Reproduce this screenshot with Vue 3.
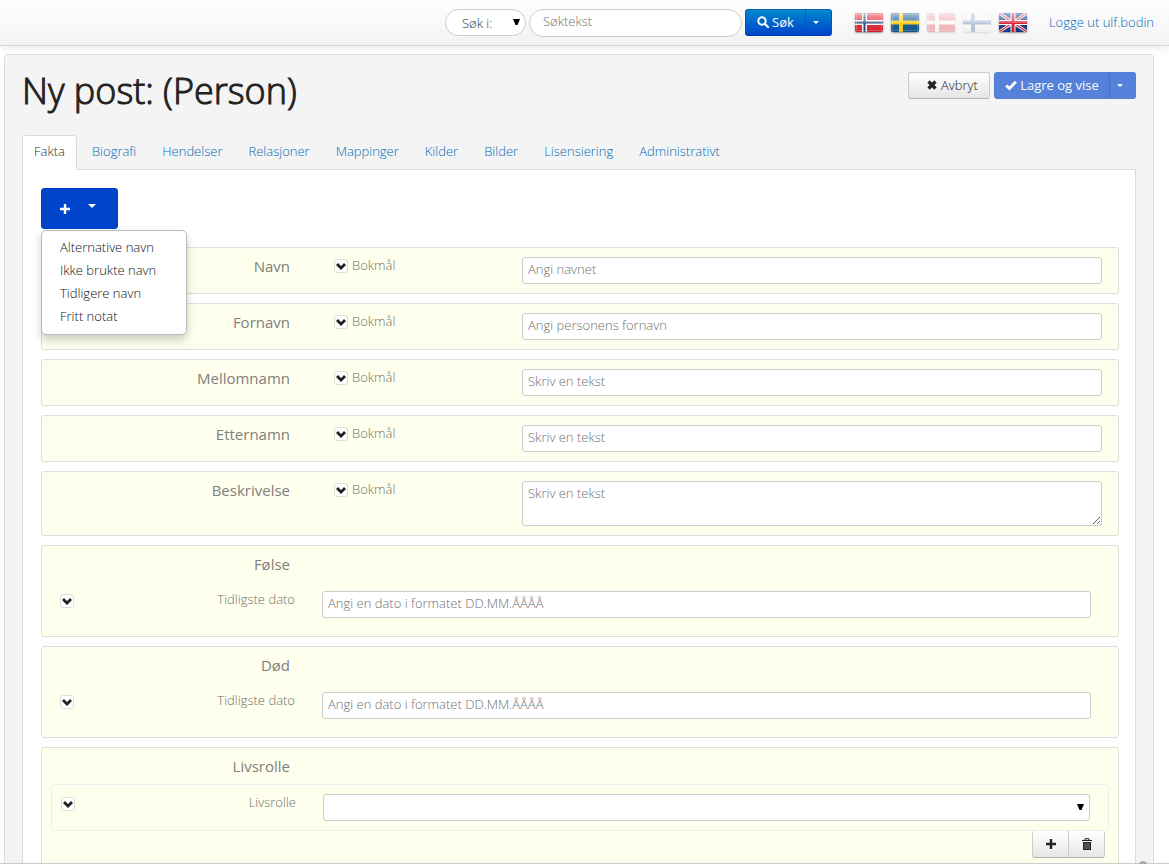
<script setup>
import { ref } from 'vue'

const tabs = ['Fakta', 'Biografi', 'Hendelser', 'Relasjoner', 'Mappinger', 'Kilder', 'Bilder', 'Lisensiering', 'Administrativt']
const activeTab = ref('Fakta')
const menuOpen = ref(true)
const menuItems = ['Alternative navn', 'Ikke brukte navn', 'Tidligere navn', 'Fritt notat']
const textFields = [
  { id: 'navn', label: 'Navn', hint: 'Angi navnet' },
  { id: 'fornavn', label: 'Fornavn', hint: 'Angi personens fornavn' },
  { id: 'mellomnamn', label: 'Mellomnamn', hint: 'Skriv en tekst' },
  { id: 'etternamn', label: 'Etternamn', hint: 'Skriv en tekst' },
  { id: 'beskrivelse', label: 'Beskrivelse', hint: 'Skriv en tekst', multiline: true }
]
const dateFields = [
  { id: 'folse', label: 'Følse' },
  { id: 'dod', label: 'Død' }
]
</script>

<template>
  <div class="app">
    <header class="navbar">
      <form class="search" @submit.prevent>
        <div class="select-wrap scope">
          <select aria-label="Søk i"><option>Søk i:</option></select>
          <svg class="arrow" viewBox="0 0 7 7" aria-hidden="true"><path d="M0 0h7L4.500 6h-2z" /></svg>
        </div>
        <input class="query" type="text" placeholder="Søktekst" aria-label="Søktekst">
        <div class="group">
          <button class="btn primary find" type="submit">
            <svg class="icon" viewBox="0 0 12 12" aria-hidden="true"><circle cx="5" cy="5" r="3.700" fill="none" stroke="currentColor" stroke-width="2" /><path d="M7.700 7.700L11 11" stroke="currentColor" stroke-width="2.200" stroke-linecap="round" /></svg>
            Søk
          </button>
          <button class="btn primary more" type="button" aria-label="Flere søkevalg"><span class="caret"></span></button>
        </div>
      </form>
      <nav class="flags" aria-label="Språk">
        <svg width="0" height="0" class="defs" aria-hidden="true">
          <defs><linearGradient id="gloss" x1="0" y1="0" x2="0" y2="1"><stop offset="0" stop-color="#fff" stop-opacity=".6" /><stop offset=".5" stop-color="#fff" stop-opacity=".25" /><stop offset=".52" stop-color="#fff" stop-opacity="0" /><stop offset="1" stop-color="#000" stop-opacity=".12" /></linearGradient></defs>
        </svg>
        <button type="button" aria-label="Norsk">
          <svg viewBox="0 0 28 19"><path fill="#e42535" d="M0 0h28v19H0z" /><path fill="#fff" d="M7 0h5v19H7zM0 7h28v5H0z" /><path fill="#28477c" d="M8.500 0h2v19h-2zM0 8.500h28v2H0z" /><path fill="url(#gloss)" d="M0 0h28v19H0z" /><path fill="none" stroke="#fff" stroke-opacity=".2" d="M1.500 1.500h25v16h-25z" /></svg>
        </button>
        <button type="button" aria-label="Svenska">
          <svg viewBox="0 0 28 19"><path fill="#125a94" d="M0 0h28v19H0z" /><path fill="#ffcb10" d="M8 0h4v19H8zM0 7.500h28v4H0z" /><path fill="url(#gloss)" d="M0 0h28v19H0z" /><path fill="none" stroke="#fff" stroke-opacity=".2" d="M1.500 1.500h25v16h-25z" /></svg>
        </button>
        <button type="button" class="faded" aria-label="Dansk">
          <svg viewBox="0 0 28 19"><path fill="#e42535" d="M0 0h28v19H0z" /><path fill="#fff" d="M8 0h4v19H8zM0 7.500h28v4H0z" /><path fill="url(#gloss)" d="M0 0h28v19H0z" /><path fill="none" stroke="#fff" stroke-opacity=".2" d="M1.500 1.500h25v16h-25z" /></svg>
        </button>
        <button type="button" class="faded" aria-label="Suomi">
          <svg viewBox="0 0 28 19"><path fill="#fafafa" d="M0 0h28v19H0z" /><path fill="#24508f" d="M8 0h4v19H8zM0 7.500h28v4H0z" /><path fill="url(#gloss)" d="M0 0h28v19H0z" /></svg>
        </button>
        <button type="button" aria-label="English">
          <svg viewBox="0 0 28 19"><path fill="#163a8c" d="M0 0h28v19H0z" /><path stroke="#fff" stroke-width="3" d="M0 0l28 19M28 0L0 19" /><path stroke="#d92435" stroke-width="1.200" d="M0 0l28 19M28 0L0 19" /><path fill="#fff" d="M11.500 0h5v19h-5zM0 7h28v5H0z" /><path fill="#d92435" d="M12.500 0h3v19h-3zM0 8h28v3H0z" /><path fill="url(#gloss)" d="M0 0h28v19H0z" /></svg>
        </button>
      </nav>
      <a class="logout" href="#">Logge ut ulf.bodin</a>
    </header>

    <main class="scroll">
      <div class="well">
        <div class="head">
          <h1>Ny post: (Person)</h1>
          <div class="actions">
            <button class="btn cancel" type="button">
              <svg class="icon" viewBox="0 0 12 12" aria-hidden="true"><path d="M2.500 2.500l7 7M9.500 2.500l-7 7" stroke="currentColor" stroke-width="3.200" /></svg>
              Avbryt
            </button>
            <div class="group muted">
              <button class="btn flat save" type="button">
                <svg class="icon" viewBox="0 0 12 12" aria-hidden="true"><path d="M1.200 6.400L4.400 9.500 10.800 2.800" fill="none" stroke="currentColor" stroke-width="2.800" /></svg>
                Lagre og vise
              </button>
              <button class="btn flat more" type="button" aria-label="Flere lagringsvalg"><span class="caret"></span></button>
            </div>
          </div>
        </div>

        <nav class="tabs">
          <a v-for="t in tabs" :key="t" href="#" :class="{ active: t === activeTab }" @click.prevent="activeTab = t">{{ t }}</a>
        </nav>

        <section class="pane">
          <div class="adder">
            <button class="btn flat add" type="button" aria-label="Legg til" :aria-expanded="menuOpen" @click="menuOpen = !menuOpen">
              <svg class="icon" viewBox="0 0 12 12" aria-hidden="true"><path d="M6 1v10M1 6h10" stroke="currentColor" stroke-width="2.400" /></svg>
              <span class="caret"></span>
            </button>
            <ul v-if="menuOpen" class="menu">
              <li v-for="m in menuItems" :key="m"><a href="#">{{ m }}</a></li>
            </ul>
          </div>

          <div v-for="f in textFields" :key="f.id" class="row text-row">
            <label class="title" :for="f.id">{{ f.label }}</label>
            <div class="lang">
              <button class="toggle" type="button" :aria-label="'Velg språk for ' + f.label"><svg viewBox="0 0 12 12"><path d="M1 5L3 3 6 6 9 3 11 5 6 10z" /></svg></button>
              <span>Bokmål</span>
            </div>
            <textarea v-if="f.multiline" :id="f.id" :placeholder="f.hint"></textarea>
            <input v-else :id="f.id" type="text" :placeholder="f.hint">
          </div>

          <div v-for="f in dateFields" :key="f.id" class="row section">
            <h2 class="title">{{ f.label }}</h2>
            <div class="sub">
              <button class="toggle" type="button" :aria-label="'Vis ' + f.label"><svg viewBox="0 0 12 12"><path d="M1 5L3 3 6 6 9 3 11 5 6 10z" /></svg></button>
              <label :for="f.id">Tidligste dato</label>
              <input :id="f.id" type="text" placeholder="Angi en dato i formatet DD.MM.ÅÅÅÅ">
            </div>
          </div>

          <div class="row section roles">
            <h2 class="title">Livsrolle</h2>
            <div class="sub boxed">
              <button class="toggle" type="button" aria-label="Vis livsrolle"><svg viewBox="0 0 12 12"><path d="M1 5L3 3 6 6 9 3 11 5 6 10z" /></svg></button>
              <label for="livsrolle">Livsrolle</label>
              <div class="select-wrap">
                <select id="livsrolle"><option></option></select>
                <svg class="arrow" viewBox="0 0 7 7" aria-hidden="true"><path d="M0 0h7L4.500 6h-2z" /></svg>
              </div>
            </div>
            <div class="group tools">
              <button class="btn" type="button" aria-label="Legg til livsrolle"><svg class="icon" viewBox="0 0 12 12" aria-hidden="true"><path d="M6 1v10M1 6h10" stroke="currentColor" stroke-width="2.400" /></svg></button>
              <button class="btn" type="button" aria-label="Slett livsrolle"><svg class="icon" viewBox="0 0 12 12" aria-hidden="true"><path d="M1 2.500h10M4 2V.7h4V2" fill="none" stroke="currentColor" /><path d="M2 4h8v8H2z" fill="currentColor" /><path d="M4 5v6M6 5v6M8 5v6" stroke="#aaa" stroke-width=".7" /></svg></button>
            </div>
          </div>
        </section>
      </div>
    </main>
    <footer class="bottom"><button type="button" class="to-top" aria-label="Til toppen"></button></footer>
  </div>
</template>

<style>
body { margin: 0; background: #fff; }
</style>

<style scoped>
* { box-sizing: border-box; }
.app {
  position: relative;
  height: 100vh;
  overflow: hidden;
  display: flex;
  flex-direction: column;
  font: 300 13px/20px "Open Sans", sans-serif;
  color: #222;
}
button, input, select, textarea { font: inherit; color: inherit; margin: 0; }
a { color: #006cb8; text-decoration: none; }

.navbar {
  position: relative;
  z-index: 2;
  flex: none;
  height: 46px;
  padding: 0 15px;
  display: flex;
  align-items: center;
  justify-content: flex-end;
  background: linear-gradient(#fff, #f2f2f2);
  border-bottom: 1px solid #d4d4d4;
  box-shadow: 0 1px 10px rgba(0, 0, 0, .1);
}
.search { display: flex; align-items: center; gap: 3px; }
input, textarea, select {
  display: block;
  width: 100%;
  height: 27px;
  padding: 0 5px 3px;
  border: 1px solid #ccc;
  border-radius: 3px;
  background: #fff;
  outline: 0;
}
::placeholder { color: #707070; opacity: 1; }
select { appearance: none; color: #333; }
.select-wrap { position: relative; }
.arrow { position: absolute; right: 6px; top: 10px; width: 7px; height: 7px; }
.scope { width: 81px; }
.scope select { padding: 0 16px; border-radius: 14px; }
.query { width: 213px; height: 28px; padding: 0 13px 3px; border-radius: 14px; }

.group { display: flex; }
.group .btn:first-child { border-radius: 3px 0 0 3px; }
.group .btn:last-child { border-radius: 0 3px 3px 0; margin-left: -1px; }
.btn {
  display: flex;
  align-items: center;
  justify-content: center;
  gap: 3px;
  height: 27px;
  padding: 0 11px 1px;
  border: 1px solid #ccc;
  border-bottom-color: #b3b3b3;
  border-radius: 3px;
  background: linear-gradient(#fff, #e6e6e6);
  color: #222;
  white-space: nowrap;
  cursor: pointer;
}
.btn.primary, .btn.flat { color: #fff; font-weight: 400; }
.btn.primary { background: linear-gradient(#0088cc, #0044cc); border-color: #0062b8 #0055c0 #003ab0; }
.btn.flat { background: #0044cc; border-color: #0040c0; }
.icon { width: 12px; height: 12px; flex: none; }
.caret { border: 3px solid transparent; border-top-color: currentColor; border-bottom: 0; }
.find { width: 61px; }
.btn.more { width: 27px; padding: 0 5px 0 0; }
.btn.flat.more { border-left-color: #002a80; }
.search .group { margin-right: 23px; }

.flags { display: flex; gap: 8px; margin-right: 22px; }
.flags button { padding: 0; border: 0; background: none; }
.flags button svg { display: block; width: 28px; height: 19px; border-radius: 2px; box-shadow: 0 1px 2px rgba(0, 0, 0, .4); }
.flags .faded { opacity: .3; }
.defs { position: absolute; }
.logout { padding-bottom: 1px; }

.scroll { flex: 1; min-height: 0; overflow: auto; scrollbar-width: none; padding: 8px 15px 0 4px; }
.well { padding: 16px 17px 40px; background: #f4f4f4; border: 1px solid #ddd; border-radius: 4px; }
.head { display: flex; justify-content: space-between; align-items: flex-start; height: 64px; }
h1 { margin: 0; font-size: 36px; line-height: 40px; font-weight: 300; -webkit-text-stroke: 1px #222; }
.actions { display: flex; gap: 4px; padding-top: 1px; }
.cancel { width: 82px; padding-left: 17px; }
.muted { opacity: .65; }
.save { width: 116px; }

.tabs { display: flex; gap: 4px; }
.tabs a { height: 34px; padding: 5px 11px 0; border: 1px solid transparent; border-width: 1px 0 0; border-radius: 3px 3px 0 0; }
.tabs .active { height: 35px; margin-bottom: -1px; position: relative; background: #fff; border-color: #ddd; border-width: 1px 1px 0; color: #333; }

.pane { padding: 18px 16px 18px 18px; background: #fff; border: 1px solid #ddd; }
.adder { position: relative; width: max-content; margin-bottom: 18px; }
.add { width: 77px; height: 41px; gap: 17px; padding: 0 15px 0 10px; }
.add .caret { border-width: 4px 4px 0; margin-bottom: 5px; }
.menu {
  position: absolute;
  z-index: 1;
  top: 42px;
  left: 0;
  width: 146px;
  margin: 0;
  padding: 5px 0 6px;
  list-style: none;
  background: #fff;
  border: 1px solid #bbb;
  border-radius: 5px;
  box-shadow: 0 5px 10px rgba(0, 0, 0, .2);
}
.menu a { display: block; padding: 0 18px; line-height: 23px; color: #111; white-space: nowrap; }

.row { margin-bottom: 9px; border: 1px solid #ddd; border-radius: 3px; background: #ffffed; color: #707070; }
.row input, .row textarea { color: #333; }
.title { margin: 0; width: 248px; text-align: right; font-size: 15px; line-height: 20px; font-weight: 400; color: #808080; }
.text-row {
  display: grid;
  grid-template-columns: 248px 144px 1fr;
  column-gap: 44px;
  align-items: start;
  padding: 9px 16px 9px 0;
}
.text-row .title, .section h2 { margin-top: -1px; }
.lang { display: flex; align-items: start; gap: 4px; line-height: 16px; }
.lang .toggle { margin-top: 2px; }
textarea { height: 45px; padding-top: 1px; resize: vertical; }
.toggle { flex: none; width: 14px; height: 14px; padding: 0; border: 1px solid #ddd; border-radius: 3px; background: #fff; color: #222; }
.toggle svg { display: block; width: 12px; height: 12px; fill: currentColor; }
.section { padding: 9px 0 18px; }
.sub {
  display: grid;
  grid-template-columns: 14px 221px 1fr;
  align-items: start;
  padding: 17px 27px 0 18px;
}
.sub .toggle { margin-top: 3px; }
.sub label { text-align: right; line-height: 16px; }
.sub input, .sub .select-wrap { margin-left: 27px; width: auto; }
.boxed { margin: 8px 9px 0; padding: 9px 18px 9px 9px; border: 1px solid #eee; border-radius: 3px; }
.tools { justify-content: flex-end; margin-right: 13px; }
.tools .btn { width: 37px; padding: 0 0 1px; border-top: 0; }

.bottom { position: relative; z-index: 2; flex: none; height: 1px; background: #ccc; box-shadow: 0 -1px 10px rgba(0, 0, 0, .1); }
.to-top { position: absolute; right: 22px; top: -2px; width: 8px; height: 8px; padding: 0; border: 0; border-radius: 50%; background: #aaa; }
</style>
